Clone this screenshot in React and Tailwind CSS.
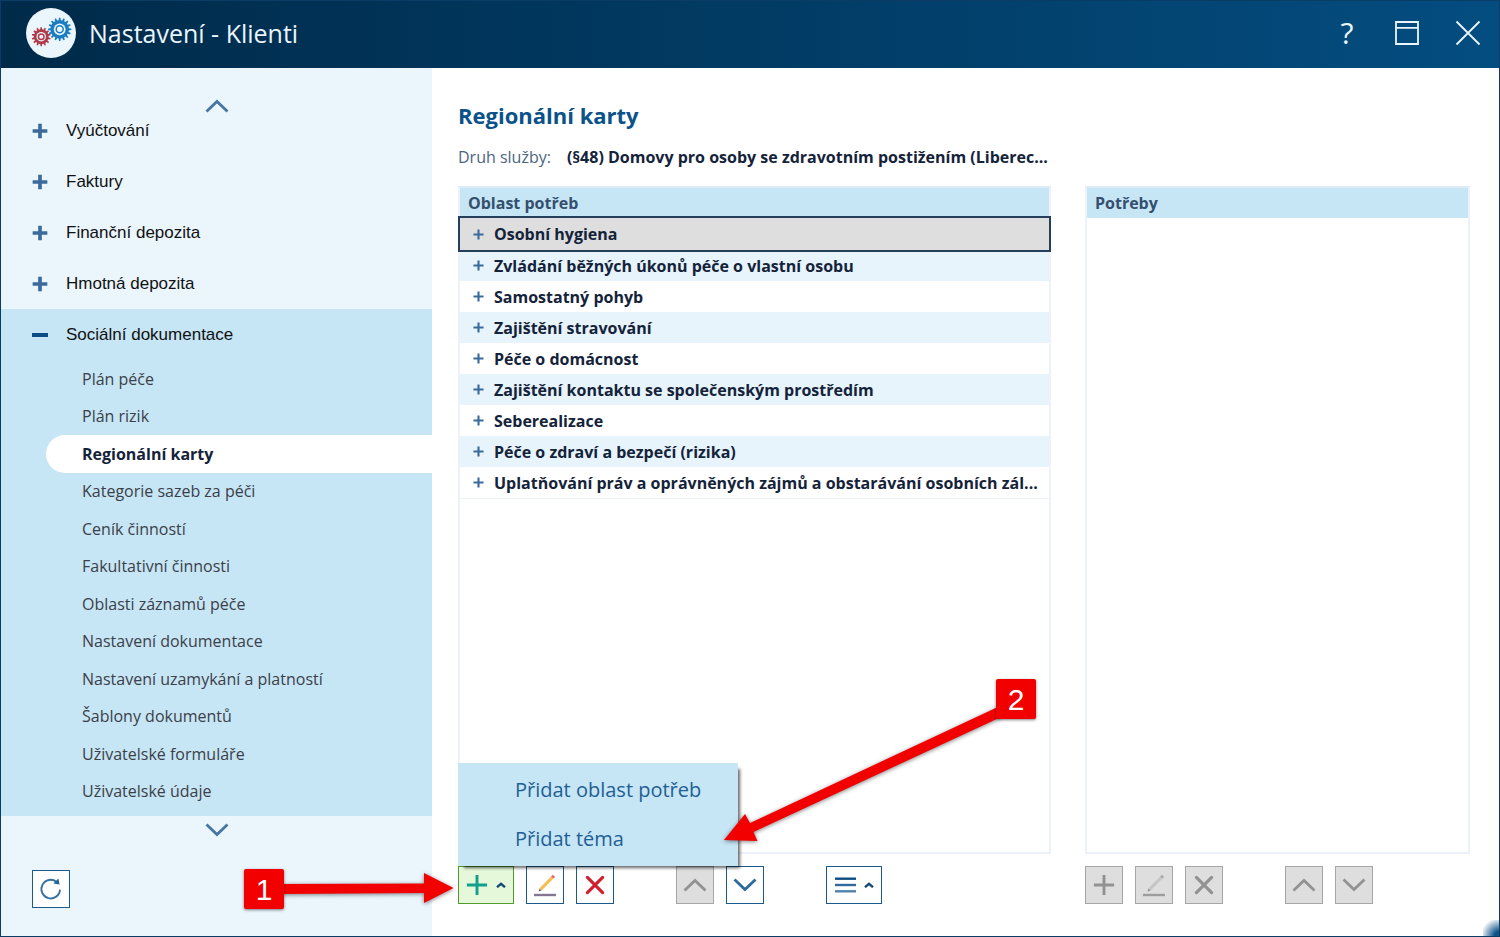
import React from "react";

const sections = ["Vyúčtování", "Faktury", "Finanční depozita", "Hmotná depozita"];

const subItems = [
  "Plán péče",
  "Plán rizik",
  "Regionální karty",
  "Kategorie sazeb za péči",
  "Ceník činností",
  "Fakultativní činnosti",
  "Oblasti záznamů péče",
  "Nastavení dokumentace",
  "Nastavení uzamykání a platností",
  "Šablony dokumentů",
  "Uživatelské formuláře",
  "Uživatelské údaje",
];

const areas = [
  "Osobní hygiena",
  "Zvládání běžných úkonů péče o vlastní osobu",
  "Samostatný pohyb",
  "Zajištění stravování",
  "Péče o domácnost",
  "Zajištění kontaktu se společenským prostředím",
  "Seberealizace",
  "Péče o zdraví a bezpečí (rizika)",
  "Uplatňování práv a oprávněných zájmů a obstarávání osobních zál...",
];

function gearPath(cx, cy, outer, inner, teeth) {
  const points = [];
  const step = (Math.PI * 2) / teeth;
  for (let i = 0; i < teeth; i++) {
    const a = i * step - Math.PI / 2;
    [
      [-0.3, inner],
      [-0.16, outer],
      [0.16, outer],
      [0.3, inner],
    ].forEach(([k, r]) => {
      points.push(`${(cx + Math.cos(a + k * step) * r).toFixed(2)} ${(cy + Math.sin(a + k * step) * r).toFixed(2)}`);
    });
  }
  return `M${points.join("L")}Z`;
}

function Gear({ cx, cy, outer, inner, teeth, color }) {
  return (
    <g>
      <path d={gearPath(cx, cy, outer, inner, teeth)} fill={color} />
      <circle cx={cx} cy={cy} r={inner * 0.64} fill="#eaf5fc" />
      <circle cx={cx} cy={cy} r={inner * 0.38} fill="none" stroke={color} strokeWidth="1.5" />
    </g>
  );
}

function Logo() {
  return (
    <svg width="50" height="50" viewBox="0 0 50 50" aria-hidden="true">
      <circle cx="25" cy="25" r="25" fill="#eaf5fc" />
      <Gear cx={15.2} cy={28.7} outer={9.5} inner={7.4} teeth={14} color="#b03a48" />
      <Gear cx={33.7} cy={21.3} outer={11.6} inner={9.2} teeth={16} color="#1c7cc0" />
    </svg>
  );
}

function Chevron({ up, color }) {
  return (
    <svg width="24" height="14" viewBox="0 0 24 14" fill="none" stroke={color} strokeWidth="2.8" aria-hidden="true">
      <path d={up ? "M1.5 12.5L12 2.5L22.5 12.5" : "M1.5 1.5L12 11.5L22.5 1.5"} />
    </svg>
  );
}

function PlusIcon({ size, width, color }) {
  return (
    <svg width={size} height={size} viewBox="0 0 24 24" stroke={color} strokeWidth={width} aria-hidden="true">
      <path d="M12 1V23M1 12H23" />
    </svg>
  );
}

function Caret() {
  return (
    <svg width="10" height="6" viewBox="0 0 10 6" fill="none" stroke="#134a78" strokeWidth="2.4" aria-hidden="true">
      <path d="M1 5.2L5 1.8L9 5.2" />
    </svg>
  );
}

function PencilIcon({ muted }) {
  return (
    <svg width="24" height="24" viewBox="0 0 24 24" aria-hidden="true">
      <path d="M1 22H23" stroke={muted ? "#9d9d9d" : "#857592"} strokeWidth="2.4" />
      <path d="M7.6 16.4L19.2 4.6" stroke={muted ? "#c6c6c6" : "#f8bd50"} strokeWidth="3" />
      <path d="M19.2 4.6L21 2.8" stroke={muted ? "#aaaaaa" : "#e66a70"} strokeWidth="3.2" />
      <path d="M6.4 15.4L8.6 17.6L5.6 18.4Z" fill={muted ? "#8f8f8f" : "#7c6a72"} />
    </svg>
  );
}

function CrossIcon({ color }) {
  return (
    <svg width="20" height="20" viewBox="0 0 20 20" stroke={color} strokeWidth="3.2" strokeLinecap="round" aria-hidden="true">
      <path d="M2.4 2.4L17.6 17.6M17.6 2.4L2.4 17.6" />
    </svg>
  );
}

function RefreshIcon() {
  return (
    <svg width="24" height="24" viewBox="0 0 24 24" aria-hidden="true">
      <path d="M21 12.6A9.3 9.3 0 1 1 17.6 4.9" fill="none" stroke="#3a72a0" strokeWidth="1.9" />
      <path d="M19.4 1.6L20.6 7.6L14.4 6.4Z" fill="#256496" />
    </svg>
  );
}

function ToolButton({ label, disabled, children }) {
  return (
    <button
      type="button"
      aria-label={label}
      disabled={disabled}
      className={
        disabled
          ? "flex size-[38px] items-center justify-center border border-[#a6a6a6] bg-[#dedede]"
          : "flex size-[38px] items-center justify-center border border-[#1d5a8c] bg-white"
      }
    >
      {children}
    </button>
  );
}

function Header() {
  return (
    <header className="flex h-[67px] shrink-0 items-center bg-linear-to-r from-[#002a49] to-[#044d80] pr-[18px] pb-1 pl-[25px] text-[#eaf5fc]">
      <Logo />
      <h1 className="ml-[13px] text-[25px] leading-8">Nastavení - Klienti</h1>
      <div className="ml-auto flex items-center gap-9">
        <button type="button" aria-label="Nápověda" className="w-6 text-center text-[30px] leading-8">
          ?
        </button>
        <button type="button" aria-label="Maximalizovat">
          <svg width="24" height="24" viewBox="0 0 24 24" fill="none" stroke="currentColor" strokeWidth="1.8">
            <path d="M1 1H23V23H1ZM1 6.8H23" />
          </svg>
        </button>
        <button type="button" aria-label="Zavřít">
          <svg width="26" height="26" viewBox="0 0 26 26" stroke="currentColor" strokeWidth="1.8">
            <path d="M1.500 1.500L24.500 24.500M24.500 1.500L1.500 24.500" />
          </svg>
        </button>
      </div>
    </header>
  );
}

function Sidebar() {
  return (
    <aside className="flex w-[431px] shrink-0 flex-col bg-[#eaf5fc] pt-7 pb-7">
      <button type="button" aria-label="Posunout nahoru" className="flex h-5 items-center justify-center self-center">
        <Chevron up color="#4577a5" />
      </button>
      <nav className="-mt-[11px]">
        <ul>
          {sections.map((name) => (
            <li key={name}>
              <button type="button" className="flex h-[51px] w-full items-center gap-[18px] pl-[31px] font-['Liberation_Sans',sans-serif] text-[17px] text-[#111111]">
                <PlusIcon size={16} width={5.5} color="#3a6b9b" />
                {name}
              </button>
            </li>
          ))}
          <li className="bg-[#c6e5f5] pb-1.5">
            <button type="button" aria-expanded="true" className="flex h-[51px] w-full items-center gap-[18px] pl-[31px] font-['Liberation_Sans',sans-serif] text-[17px] text-[#111111]">
              <svg width="16" height="4" viewBox="0 0 16 4" aria-hidden="true">
                <path d="M0 2H16" stroke="#0d4c82" strokeWidth="4" />
              </svg>
              {"Sociální dokumentace"}
            </button>
            <ul className="grid h-[450px] auto-rows-fr pl-[45px] text-[16px]">
              {subItems.map((name) => (
                <li key={name} className="grid">
                  <a
                    href="#"
                    className={
                      name === "Regionální karty"
                        ? "flex items-center rounded-l-full bg-white pl-9 font-bold text-[#14233a]"
                        : "flex items-center pl-9 text-[#3c4048]"
                    }
                  >
                    {name}
                  </a>
                </li>
              ))}
            </ul>
          </li>
        </ul>
      </nav>
      <button type="button" aria-label="Posunout dolů" className="mt-1 flex h-5 items-center justify-center self-center">
        <Chevron color="#4577a5" />
      </button>
      <div className="mt-auto pl-[31px]">
        <ToolButton label="Obnovit">
          <RefreshIcon />
        </ToolButton>
      </div>
    </aside>
  );
}

function AreasPanel() {
  return (
    <section className="flex min-w-0 flex-col">
      <div className="flex-1 border-2 border-[#edf2fa] border-t-[#dcebf6]">
        <table className="w-full table-fixed border-separate border-spacing-0 border-b border-[#edf2fa] text-left text-[16px]">
          <thead>
            <tr className="h-[30px] bg-[#c6e5f5]">
              <th className="p-0 pl-2 font-bold text-[#34506e]">Oblast potřeb</th>
            </tr>
          </thead>
          <tbody>
            {areas.map((name, i) => (
              <tr
                key={name}
                className={
                  i === 0
                    ? "relative z-10 h-8 bg-[#dedede] outline-2 outline-[#243f5b]"
                    : i % 2
                      ? "h-[31px] bg-[#e7f4fb]"
                      : "h-[31px] bg-white"
                }
              >
                <td className="p-0">
                  <button type="button" className="flex w-full items-center gap-[10px] pl-[13px] font-bold whitespace-nowrap text-[#14233a]">
                    <PlusIcon size={11} width={4.6} color="#3a6b9b" />
                    {name}
                  </button>
                </td>
              </tr>
            ))}
          </tbody>
        </table>
      </div>
      <div className="mt-3 flex h-[38px] gap-3">
        <div className="relative">
          <button type="button" aria-label="Přidat" aria-expanded="true" className="flex h-[38px] w-14 items-center justify-center gap-2 border border-[#4f9a2c] bg-[#e5f8da]">
            <PlusIcon size={22} width={3.2} color="#12a08c" />
            <Caret />
          </button>
          <ul className="absolute bottom-full left-0 z-20 w-[280px] bg-[#c6e5f5] pt-0.5 pb-[3px] text-[20px] text-[#1f5f94] shadow-[4px_4px_3px_-2px_rgba(0,0,0,0.6)]">
            <li>
              <button type="button" className="flex h-[49px] w-full items-center pl-[57px]">
                Přidat oblast potřeb
              </button>
            </li>
            <li>
              <button type="button" className="flex h-[49px] w-full items-center pl-[57px]">
                Přidat téma
              </button>
            </li>
          </ul>
        </div>
        <ToolButton label="Upravit">
          <PencilIcon />
        </ToolButton>
        <ToolButton label="Smazat">
          <CrossIcon color="#d11f2d" />
        </ToolButton>
        <div className="ml-[50px] flex gap-3">
          <ToolButton label="Nahoru" disabled>
            <Chevron up color="#929292" />
          </ToolButton>
          <ToolButton label="Dolů">
            <Chevron color="#2c6a9c" />
          </ToolButton>
        </div>
        <button type="button" aria-label="Nabídka" className="ml-[50px] flex h-[38px] w-14 items-center justify-center gap-2 border border-[#1d5a8c] bg-white">
          <svg width="21" height="16" viewBox="0 0 21 16" strokeWidth="2.4" aria-hidden="true">
            <path d="M0 1.7H21" stroke="#0d4c82" />
            <path d="M0 8H21" stroke="#2f6b9d" />
            <path d="M0 14.3H21" stroke="#4f83ad" />
          </svg>
          <Caret />
        </button>
      </div>
    </section>
  );
}

function NeedsPanel() {
  return (
    <section className="flex min-w-0 flex-col">
      <div className="flex-1 border-2 border-[#edf2fa] border-t-[#dcebf6]">
        <table className="w-full text-left text-[16px]">
          <thead>
            <tr className="h-[30px] bg-[#c6e5f5]">
              <th className="p-0 pl-2 font-bold text-[#34506e]">Potřeby</th>
            </tr>
          </thead>
        </table>
      </div>
      <div className="mt-3 flex h-[38px] gap-3">
        <ToolButton label="Přidat potřebu" disabled>
          <PlusIcon size={22} width={3.2} color="#929292" />
        </ToolButton>
        <ToolButton label="Upravit potřebu" disabled>
          <PencilIcon muted />
        </ToolButton>
        <ToolButton label="Smazat potřebu" disabled>
          <CrossIcon color="#929292" />
        </ToolButton>
        <div className="ml-[50px] flex gap-3">
          <ToolButton label="Potřeba nahoru" disabled>
            <Chevron up color="#929292" />
          </ToolButton>
          <ToolButton label="Potřeba dolů" disabled>
            <Chevron color="#929292" />
          </ToolButton>
        </div>
      </div>
    </section>
  );
}

function Annotations() {
  return (
    <div className="pointer-events-none absolute -inset-px z-30 font-['Liberation_Sans',sans-serif] text-[30px] text-white">
      <svg width="1500" height="937" viewBox="0 0 1500 937" fill="#f20000" className="absolute top-0 left-0 drop-shadow-[0_1px_2px_rgba(0,0,0,0.5)]" aria-hidden="true">
        <path d="M280 884L424 883.500V873L453.500 888L424 903V893L280 894Z" />
        <path d="M1000 706L750 823L745 814L724 840L757.500 841L753.500 832L1000 717.500Z" />
      </svg>
      <div className="absolute top-[869px] left-[244px] flex size-10 items-center justify-center rounded-xs bg-[#f20000] shadow-[0_1px_3px_rgba(0,0,0,0.5)]">1</div>
      <div className="absolute top-[679px] left-[996px] flex size-10 items-center justify-center rounded-xs bg-[#f20000] shadow-[0_1px_3px_rgba(0,0,0,0.5)]">2</div>
    </div>
  );
}

export default function App() {
  return (
    <div className="relative flex min-h-screen flex-col overflow-hidden border border-[#0a3c66] bg-white font-['Open_Sans',sans-serif]">
      <Header />
      <div className="flex flex-1">
        <Sidebar />
        <main className="flex min-w-0 flex-1 flex-col pt-[31px] pr-[29px] pb-8 pl-[26px]">
          <h2 className="text-[22px] leading-8 font-bold text-[#0b5289]">Regionální karty</h2>
          <p className="mt-3.5 flex gap-4 text-[16px] leading-6 whitespace-nowrap">
            <span className="text-[#4c6584]">Druh služby:</span>
            <span className="font-bold text-[#14233a]">(§48) Domovy pro osoby se zdravotním postižením (Liberec...</span>
          </p>
          <div className="mt-[17px] grid flex-1 grid-cols-[593fr_385fr] gap-[34px]">
            <AreasPanel />
            <NeedsPanel />
          </div>
        </main>
      </div>
      <div className="absolute right-0 bottom-0 size-4 bg-[radial-gradient(circle_at_bottom_right,#0f5288_20%,transparent_80%)]" />
      <Annotations />
    </div>
  );
}
